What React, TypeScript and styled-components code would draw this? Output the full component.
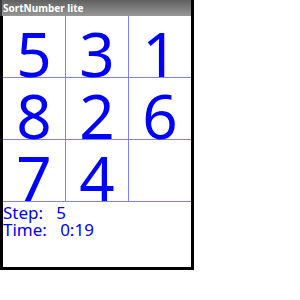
import styled, { createGlobalStyle } from 'styled-components';

const Global = createGlobalStyle`
    html, body {
        margin: 0;
        padding: 0;
        background: #ffffff;
    }
`;

const tiles: (number | null)[] = [5, 3, 1, 8, 2, 6, 7, 4, null];

function App() {
    return (
        <>
            <Global />
            <Frame>
                <TitleBar>SortNumber lite</TitleBar>
                <Body>
                    <Board>
                        {tiles.map((n, i) => (
                            <Cell key={i} $last={i % 3 === 2}>
                                {n ?? ''}
                            </Cell>
                        ))}
                    </Board>
                    <Status>
                        <Line>{'Step:   5'}</Line>
                        <Line>{'Time:   0:19'}</Line>
                    </Status>
                </Body>
            </Frame>
        </>
    );
}

export default App;

const Frame = styled.div`
    width: 194px;
    height: 270px;
    box-sizing: border-box;
    border-right: 3px solid #000;
    border-bottom: 3px solid #000;
    display: flex;
    flex-direction: column;
    background: #fff;
`;

const TitleBar = styled.div`
    height: 16px;
    flex: none;
    box-sizing: border-box;
    padding-left: 1px;
    border-left: 2px solid #3a3a3a;
    background: linear-gradient(#606060, #989898);
    color: #fff;
    font-family: "Noto Sans", "DejaVu Sans", sans-serif;
    font-weight: bold;
    font-size: 10px;
    line-height: 16px;
    white-space: nowrap;
`;

const Body = styled.div`
    flex: 1;
    border-left: 3px solid #000;
    display: flex;
    flex-direction: column;
`;

const Board = styled.div`
    display: grid;
    grid-template-columns: 63px 63px 62px;
    grid-auto-rows: 62px;
`;

const Cell = styled.div<{ $last: boolean }>`
    box-sizing: border-box;
    border-bottom: 1px solid #8080ff;
    border-right: ${p => (p.$last ? 'none' : '1px solid #8080ff')};
    text-align: center;
    color: #0000ff;
    font-family: "Noto Sans", "Open Sans", sans-serif;
    font-size: 62px;
    line-height: 44px;
    padding-top: 15px;
`;

const Status = styled.div`
    padding-top: 2px;
    color: #0000ff;
    font-family: "Noto Sans", "Open Sans", sans-serif;
    font-size: 17px;
    line-height: 17px;
`;

const Line = styled.div`
    white-space: pre;
`;
